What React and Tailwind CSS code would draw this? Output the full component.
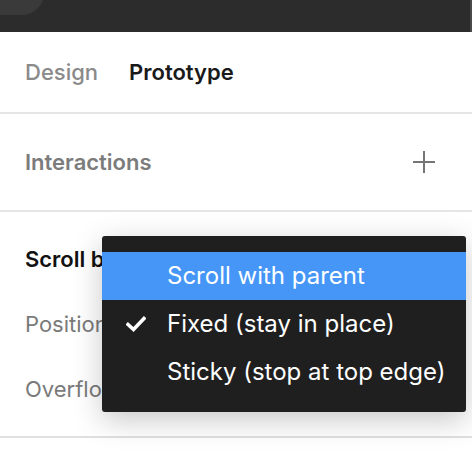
import React from 'react';

function Check() {
  return (
    <svg width="20" height="16" viewBox="0 0 20 16" className="shrink-0">
      <path d="M2 8.5 L7.5 13.5 L18 2.5" fill="none" stroke="white" strokeWidth="3.6" strokeLinecap="square" />
    </svg>
  );
}

const items = [
  { label: 'Scroll with parent', active: true },
  { label: 'Fixed (stay in place)', checked: true },
  { label: 'Sticky (stop at top edge)' },
];

export default function App() {
  return (
    <div className="relative w-[472px] h-[454px] bg-white overflow-hidden" style={{ fontFamily: 'Inter, "Noto Sans", sans-serif' }}>
      {/* top toolbar */}
      <div className="relative h-[32px] bg-[#2c2c2c] border-r-2 border-[#4a4a4a] overflow-hidden">
        <div className="absolute -left-[20px] -top-[30px] w-[64px] h-[45px] rounded-br-[22px] bg-[#3a3a3a]" />
      </div>

      {/* tabs */}
      <div className="h-[80px] flex items-center gap-[31px] pl-[25px] text-[22px]">
        <span className="text-[#8a8a8a] font-medium">Design</span>
        <span className="text-[#1a1a1a] font-semibold">Prototype</span>
      </div>
      <div className="h-[2px] bg-[#e5e5e5]" />

      {/* interactions */}
      <div className="h-[96px] flex items-center justify-between pl-[25px] pr-[37px]">
        <span className="text-[22px] font-semibold text-[#7c7c7c]">Interactions</span>
        <svg width="22" height="22" viewBox="0 0 22 22">
          <path d="M11 0 V22 M0 11 H22" stroke="#757575" strokeWidth="2" />
        </svg>
      </div>
      <div className="h-[2px] bg-[#e5e5e5]" />

      {/* scroll behavior */}
      <div className="h-[224px] flex flex-col pl-[25px] pt-[15px] text-[22px]">
        <div className="h-[65px] flex items-center font-semibold text-[#111]">Scroll behavior</div>
        <div className="h-[65px] flex items-center text-[#7a7a7a]">Position</div>
        <div className="h-[65px] flex items-center text-[#7a7a7a]">Overflow</div>
      </div>
      <div className="h-[2px] bg-[#e0e0e0]" />

      {/* dropdown menu */}
      <div className="absolute left-[102px] top-[236px] w-[364px] py-[16px] rounded-[3px] bg-[#1f1f1f] shadow-[0_8px_30px_rgba(0,0,0,0.22)]">
        {items.map((it) => (
          <div
            key={it.label}
            className={`h-[48px] flex items-center text-[24px] text-white ${it.active ? 'bg-[#4596f6]' : ''}`}
          >
            <div className="w-[65px] flex justify-end pr-[21px]">{it.checked && <Check />}</div>
            <span>{it.label}</span>
          </div>
        ))}
      </div>
    </div>
  );
}
